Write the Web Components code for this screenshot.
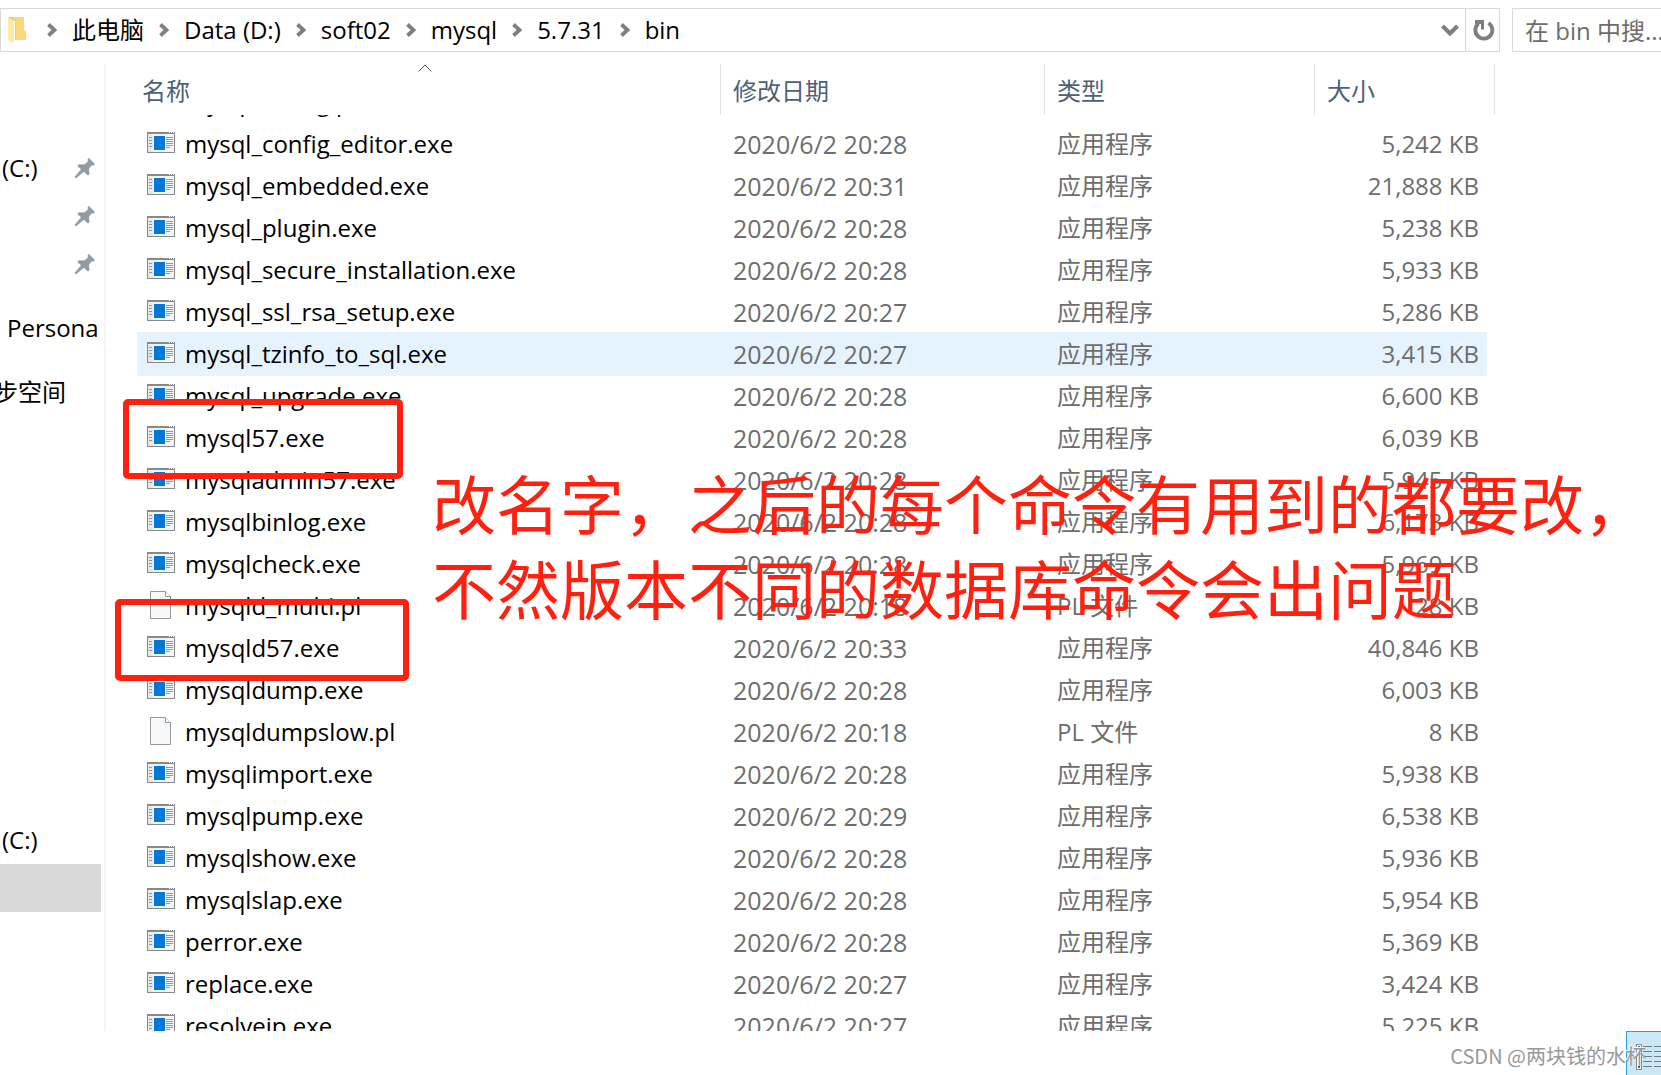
<!DOCTYPE html>
<html lang="zh-CN">
<head>
<meta charset="utf-8">
<title>bin</title>
<style>
html, body { margin: 0; height: 100%; }
body { background: #fff; color: #000; overflow: hidden; font-family: "Open Sans", "Noto Sans CJK SC", sans-serif; font-size: 24px; }
</style>
</head>
<body>
<explorer-window>
  <address-bar slot="address"></address-bar>
  <nav-pane slot="nav"></nav-pane>
  <file-list slot="files"></file-list>
  <status-bar slot="status"></status-bar>
  <mark-box slot="notes" style="left:123px;top:399px;width:280px;height:80px"></mark-box>
  <mark-box slot="notes" style="left:115px;top:599px;width:294px;height:82px"></mark-box>
  <red-note slot="notes">改名字，之后的每个命令有用到的都要改，<br>不然版本不同的数据库命令会出问题</red-note>
  <water-mark slot="notes">CSDN @两块钱的水杯</water-mark>
</explorer-window>
<script>
const define = (name, html, setup) => customElements.define(name, class extends HTMLElement {
  constructor() {
    super();
    this.attachShadow({ mode: 'open' }).innerHTML = '<style>*{box-sizing:border-box}:host{box-sizing:border-box}</style>' + html;
  }
  connectedCallback() { if (setup) setup(this.shadowRoot, this); }
});

define('explorer-window', `
<style>
:host { display: flex; flex-direction: column; height: 100vh; position: relative; padding-top: 8px; overflow: hidden; }
.body { flex: 1; min-height: 0; display: flex; margin-top: 12px; }
</style>
<slot name="address"></slot>
<div class="body"><slot name="nav"></slot><slot name="files"></slot></div>
<slot name="status"></slot>
<slot name="notes"></slot>`);

define('folder-icon', `
<style>:host{display:block;width:19px;height:28px}svg{display:block}</style>
<svg width="19" height="28" viewBox="0 0 19 28"><path d="M2 1h14v13l2 2v8H7V5z" fill="#f5d06c"/><path d="M4 1h12v13l2 2v8H8V4z" fill="#f8d878"/><path d="M0 1l6 4v19l-1 3-5-3z" fill="#ffe9a6"/><path d="M0 1h4l2 4z" fill="#eec75f"/></svg>`);

define('crumb-arrow', `
<style>:host{display:block;width:10px;height:14px}svg{display:block}</style>
<svg width="10" height="14" viewBox="0 0 10 14"><path d="M1.5 1.5L7.500 7l-6 5.500" fill="none" stroke="#7f7f7f" stroke-width="3.800"/></svg>`);

define('address-bar', `
<style>
:host { display: flex; gap: 12px; height: 44px; }
.box { flex: 1; display: flex; border: 1px solid #d9d9d9; min-width: 0; }
nav { flex: 1; display: flex; align-items: center; gap: 15px; padding-left: 7px; }
folder-icon { margin-right: 5px; }
a { color: #000; text-decoration: none; line-height: 32px; white-space: nowrap; }
button { border: 0; background: none; padding: 0; display: flex; align-items: center; justify-content: center; }
.drop { width: 30px; }
.refresh { width: 34px; border-left: 1px solid #d9d9d9; padding-left: 2px; }
label { display: flex; width: 149px; border: 1px solid #d9d9d9; border-right: 0; padding-left: 12px; }
input { width: 100%; min-width: 0; border: 0; outline: 0; padding: 0; font: inherit; background: none; }
input::placeholder { color: #6d6d6d; opacity: 1; }
</style>
<div class="box">
  <nav aria-label="路径"><folder-icon></folder-icon></nav>
  <button class="drop" aria-label="以前的位置"><svg width="18" height="12" viewBox="0 0 18 12"><path d="M1.500 2L9 9.500l7.500-7.500" fill="none" stroke="#7f7f7f" stroke-width="4"/></svg></button>
  <button class="refresh" aria-label="刷新"><svg width="22" height="24" viewBox="0 0 22 24"><path d="M15.500 5A8.500 8.500 0 1 1 5.500 5.500" fill="none" stroke="#7f7f7f" stroke-width="3.800"/><path d="M2 2h9v9.500H8V6H2z" fill="#7f7f7f"/></svg></button>
</div>
<label><input type="text" aria-label="搜索" placeholder="在 bin 中搜..."></label>`,
root => {
  const nav = root.querySelector('nav');
  for (const part of ['此电脑', 'Data (D:)', 'soft02', 'mysql', '5.7.31', 'bin']) {
    const a = document.createElement('a');
    a.href = '#';
    a.textContent = part;
    nav.append(document.createElement('crumb-arrow'), a);
  }
});

define('pin-icon', `
<style>:host{display:block;width:20px;height:20px}svg{display:block}</style>
<svg width="20" height="20" viewBox="0 0 20 20"><path d="M14 0l6 6-1 1.500-2-.2-3 3.200.5 5.500-1.500 1.500-4.200-3.800L1.500 20H0v-1.500l6-7.200L2.200 8 4 6.200l5.500.3L13 3.200 12.500 1.500z" fill="#929ca4"/></svg>`);

define('nav-item', `
<style>
:host { display: flex; align-items: center; height: 48px; width: 101px; overflow: hidden; flex: none; }
:host([selected]) { background: #d9d9d9; }
a { flex: 1; min-width: 0; color: #000; text-decoration: none; white-space: nowrap; line-height: 32px; padding-left: 2px; }
:host([indent]) a { padding-left: 7px; }
:host([cut]) a { margin-left: -8px; }
pin-icon { margin-right: 6px; }
</style>
<a href="#"><slot></slot></a>`,
(root, host) => { if (host.hasAttribute('pinned')) root.append(document.createElement('pin-icon')); });

define('nav-pane', `
<style>
:host { display: flex; flex-direction: column; gap: 16px; width: 106px; flex: none; border-right: 2px solid #f5f5f5; padding-top: 80px; overflow: hidden; }
.drives { margin-top: 384px; }
</style>
<div><nav-item pinned>(C:)</nav-item><nav-item pinned></nav-item><nav-item pinned></nav-item></div>
<nav-item indent>Persona</nav-item>
<nav-item cut>步空间</nav-item>
<div class="drives"><nav-item>(C:)</nav-item><nav-item selected></nav-item></div>`);

define('file-icon', `
<style>:host{display:block;width:28px;height:28px;flex:none}svg{display:block}</style>`,
(root, host) => {
  const exe = `<svg width="28" height="28" viewBox="0 0 28 28" shape-rendering="crispEdges"><path d="M0 3h28v21H0z" fill="#85898d"/><path d="M1 5h26v18H1z" fill="#f4f5f6"/><path d="M1 6h5v17H1z" fill="#e6e7e9"/><path d="M22 3h1v1h-1zM24 3h1v1h-1zM26 3h1v1h-1z" fill="#fff"/><path d="M7 7h11v14H7z" fill="#0078d7"/><path d="M2 8.500h3M2 11.500h3M2 14.500h3M2 17.500h3M19 8.500h7M19 10.500h7M19 12.500h7M19 14.500h7M19 16.500h7M19 18.500h4" stroke="#96999c"/></svg>`;
  const page = `<svg width="28" height="28" viewBox="0 0 28 28"><path d="M3.500.5h15l5 5v22h-20z" fill="#f7f8f9" stroke="#96999c"/><path d="M18.500.5v5h5" fill="#fff" stroke="#96999c"/></svg>`;
  root.innerHTML += host.getAttribute('kind') === 'pl' ? page : exe;
});

const FILES = `mysql_config.pl|20:18|28
mysql_config_editor.exe|20:28|5,242
mysql_embedded.exe|20:31|21,888
mysql_plugin.exe|20:28|5,238
mysql_secure_installation.exe|20:28|5,933
mysql_ssl_rsa_setup.exe|20:27|5,286
mysql_tzinfo_to_sql.exe|20:27|3,415
mysql_upgrade.exe|20:28|6,600
mysql57.exe|20:28|6,039
mysqladmin57.exe|20:28|5,945
mysqlbinlog.exe|20:28|6,173
mysqlcheck.exe|20:28|5,969
mysqld_multi.pl|20:18|28
mysqld57.exe|20:33|40,846
mysqldump.exe|20:28|6,003
mysqldumpslow.pl|20:18|8
mysqlimport.exe|20:28|5,938
mysqlpump.exe|20:29|6,538
mysqlshow.exe|20:28|5,936
mysqlslap.exe|20:28|5,954
perror.exe|20:28|5,369
replace.exe|20:27|3,424
resolveip.exe|20:27|5,225`.split('\n').map(line => line.split('|'));

define('file-list', `
<style>
:host { display: block; flex: 1; min-width: 0; overflow: hidden; padding-left: 31px; }
table { width: 1358px; table-layout: fixed; border-collapse: separate; border-spacing: 0; }
.c1 { width: 584px; } .c2 { width: 324px; } .c3 { width: 270px; } .c4 { width: 180px; }
th { position: sticky; top: 0; z-index: 2; height: 51px; background: #fff; border-right: 1px solid #e3e3e3; padding: 2px 0 0 12px; text-align: left; font-weight: 400; line-height: 32px; color: #4c607a; }
th:first-child { padding-left: 5px; }
th svg { position: absolute; left: 281px; top: 0; }
td { height: 42px; padding: 0 0 0 12px; line-height: 32px; color: #6d6d6d; white-space: nowrap; }
td:first-child { padding-left: 10px; color: #000; }
td:nth-child(2) { font-size: 25px; }
td:last-child { text-align: right; padding-right: 16px; }
.name { display: flex; align-items: center; gap: 10px; }
file-icon { margin-bottom: 2px; }
.hover { position: relative; z-index: 0; }
.hover::after { content: ""; position: absolute; z-index: -1; inset: -1px 8px -1px 0; background: #e5f3ff; }
</style>
<table>
  <colgroup><col class="c1"><col class="c2"><col class="c3"><col class="c4"></colgroup>
  <thead><tr><th scope="col">名称<svg width="14" height="8" viewBox="0 0 14 8"><path d="M.5 7.500l6.500-6.500 6.500 6.500" fill="none" stroke="#555"/></svg></th><th scope="col">修改日期</th><th scope="col">类型</th><th scope="col">大小</th></tr></thead>
  <tbody></tbody>
</table>`,
(root, host) => {
  root.querySelector('tbody').innerHTML = FILES.map(([name, time, size]) => {
    const kind = name.endsWith('.pl') ? 'pl' : 'exe';
    return `<tr${name.includes('tzinfo') ? ' class="hover"' : ''}><td><div class="name"><file-icon kind="${kind}"></file-icon><span>${name}</span></div></td><td>2020/6/2 ${time}</td><td>${kind === 'pl' ? 'PL 文件' : '应用程序'}</td><td>${size} KB</td></tr>`;
  }).join('');
  host.scrollTop = 34;
});

define('status-bar', `
<style>
:host { display: flex; justify-content: flex-end; height: 44px; flex: none; }
button { width: 35px; padding: 0 0 0 9px; border: 1px solid #26a0da; border-width: 1px 0 0 1px; background: #cce8f6; overflow: hidden; display: flex; align-items: center; }
svg { flex: none; margin-top: 6px; }
</style>
<button aria-label="详细信息"><svg width="26" height="26" viewBox="0 0 26 26" shape-rendering="crispEdges"><path d="M.5.5h5v25h-5z" fill="#fff" stroke="#8a8a8a"/><path d="M2 2h2v2H2zM2 7h2v2H2zM2 12h2v2H2zM2 17h2v2H2zM2 22h2v2H2z" fill="#3a6a80"/><path d="M7 2.500h9M18 2.500h8M7 7.500h9M18 7.500h8M7 12.500h9M18 12.500h8M7 17.500h9M18 17.500h8M7 22.500h9M18 22.500h8" stroke="#6f7f88"/></svg></button>`);

define('mark-box', `<style>:host{display:block;position:absolute;z-index:3;border:6px solid #ff2010;border-radius:5px}</style>`);

define('red-note', `
<style>:host{display:block;position:absolute;z-index:3;left:432px;top:459px;font-family:"Noto Sans CJK SC",sans-serif;font-size:64px;line-height:85px;color:#ff2010;white-space:nowrap}</style><slot></slot>`);

define('water-mark', `
<style>:host{display:block;position:absolute;z-index:4;right:15px;bottom:4px;font-family:"Noto Sans CJK SC",sans-serif;font-size:20px;line-height:30px;color:#999;text-shadow:-1px -1px 0 #fff;white-space:nowrap}</style><slot></slot>`);
</script>
</body>
</html>
